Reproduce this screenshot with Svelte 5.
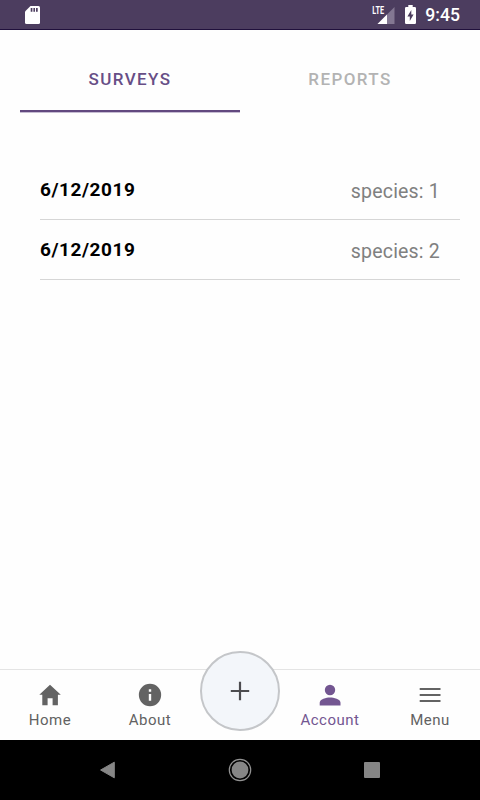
<script>
  const surveys = [
    { date: '6/12/2019', species: 1 },
    { date: '6/12/2019', species: 2 }
  ];
</script>

<div class="screen">
  <header class="status">
    <svg class="sd" width="15" height="18" viewBox="0 0 15 18">
      <path fill="#fff" d="M5.5 0H13.5Q15 0 15 1.5V16.5Q15 18 13.5 18H1.5Q0 18 0 16.5V5.5Z" />
      <path fill="#4c3d5f" d="M5.7 2h1.7v3.7H5.7zM8.4 2h1.6v3.7H8.4zM11 2h1.7v3.7H11z" />
    </svg>
    <div class="indicators">
      <svg class="signal" width="23" height="19" viewBox="0 0 23 19">
        <path fill="#837792" d="M22.5 1V18H5.5Z" />
        <path fill="#fff" d="M15 8.5V18H5.5Z" />
        <path fill="#4c3d5f" d="M0 0H12.5V9H0Z" />
        <text x="0.3" y="8.3" textLength="11.7" lengthAdjust="spacingAndGlyphs">LTE</text>
      </svg>
      <svg class="battery" width="11" height="19" viewBox="0 0 11 19">
        <path fill="#fff" d="M3.3 0H7.7V2H9.8Q11 2 11 3.2V17.7Q11 19 9.8 19H1.2Q0 19 0 17.7V3.2Q0 2 1.2 2H3.3Z" />
        <path fill="#4c3d5f" d="M6.3 5V9.6H8.6L4.8 16V11.4H2.4Z" />
      </svg>
      <span class="clock">9:45</span>
    </div>
  </header>

  <div class="tabs">
    <button class="active">SURVEYS</button>
    <button>REPORTS</button>
  </div>

  <main>
    {#each surveys as survey}
      <div class="row">
        <strong>{survey.date}</strong>
        <span>species: {survey.species}</span>
      </div>
    {/each}
  </main>

  <nav>
    <div class="item">
      <svg width="26" height="26" viewBox="0 0 26 26"><path d="M13 2.8L23.8 12.8H20.9V23.2H15.6V16.2H10.6V23.2H5.3V12.8H2.3Z" /></svg>
      <span>Home</span>
    </div>
    <div class="item">
      <svg width="26" height="26" viewBox="0 0 24 24"><path d="M12 1.7a10.3 10.3 0 1 0 0 20.6 10.3 10.3 0 0 0 0-20.6zM13.1 17.4h-2.2v-6.4h2.2zm0-8.3h-2.2V6.8h2.2z" /></svg>
      <span>About</span>
    </div>
    <div class="center">
      <div class="add">
        <svg width="20" height="20" viewBox="0 0 20 20"><path d="M8.9 .8h2.2v8.1h8.1v2.2h-8.1v8.1H8.9v-8.1H.8V8.9h8.1z" /></svg>
      </div>
    </div>
    <div class="item current">
      <svg width="26" height="26" viewBox="0 0 26 26"><circle cx="13" cy="8" r="5.2" /><path d="M2.7 23.5V20.7C2.7 17.3 9.3 15.6 13 15.6S23.5 17.3 23.5 20.7V23.5Z" /></svg>
      <span>Account</span>
    </div>
    <div class="item">
      <svg width="26" height="26" viewBox="0 0 26 26"><path d="M2.7 5.9h20.8v2.2H2.7zM2.7 11.9h20.8v2.2H2.7zM2.7 17.9h20.8v2.2H2.7z" /></svg>
      <span>Menu</span>
    </div>
  </nav>

  <footer>
    <svg width="16" height="18" viewBox="0 0 16 18"><path d="M14.3 1.2V16.8L.6 9Z" stroke="#868686" stroke-width="1" stroke-linejoin="round" /></svg>
    <svg width="24" height="24" viewBox="0 0 24 24"><circle cx="12" cy="12" r="8.4" /><circle cx="12" cy="12" r="10.7" fill="none" stroke="#929292" stroke-width="1.2" /></svg>
    <svg width="16" height="16" viewBox="0 0 16 16"><rect width="16" height="16" rx="1" /></svg>
  </footer>
</div>

<style>
  :global(body) {
    margin: 0;
  }
  .screen {
    display: flex;
    flex-direction: column;
    width: 480px;
    height: 800px;
    background: #fefefe;
    font-family: Roboto, sans-serif;
    overflow: hidden;
  }
  .status {
    box-sizing: border-box;
    height: 30px;
    flex: none;
    display: flex;
    justify-content: space-between;
    align-items: flex-start;
    padding: 0 20px 0 25px;
    background: #4c3d5f;
    border-bottom: 1px solid #20103c;
  }
  .sd {
    margin-top: 6px;
  }
  .indicators {
    display: flex;
    align-items: flex-start;
  }
  .signal {
    margin: 6px 10px 0 0;
    overflow: visible;
  }
  .signal text {
    fill: #fff;
    font-size: 10.5px;
    font-weight: 700;
  }
  .battery {
    margin: 5px 9px 0 0;
  }
  .clock {
    font-size: 17.6px;
    font-weight: 500;
    line-height: 21px;
    margin-top: 5px;
    color: #fff;
  }
  .tabs {
    display: flex;
    flex: none;
    height: 82px;
    margin: 0 20px;
  }
  .tabs button {
    box-sizing: border-box;
    flex: 1;
    border: 0;
    border-bottom: 2px solid transparent;
    background: none;
    height: 82px;
    padding: 30px 0 12px;
    font: 500 17px/38px Roboto, sans-serif;
    letter-spacing: 1.4px;
    color: #b3b3b3;
  }
  .tabs .active {
    color: #674e86;
    border-bottom-color: #62497f;
    box-shadow: 0 1px 0 #c6bcd2;
  }
  main {
    flex: 1;
    padding: 48px 20px 0 40px;
  }
  .row {
    box-sizing: border-box;
    height: 60px;
    display: flex;
    justify-content: space-between;
    align-items: center;
    padding-right: 20px;
    border-bottom: 1px solid #d6d6d6;
    font-size: 19px;
  }
  .row strong {
    letter-spacing: 0.55px;
    font-weight: 700;
    color: #000;
  }
  .row span {
    font-size: 19.5px;
    letter-spacing: 0.2px;
    color: #808080;
    padding-top: 4px;
  }
  nav {
    box-sizing: border-box;
    height: 71px;
    flex: none;
    display: flex;
    border-top: 1px solid #e4e4e4;
    color: #626262;
  }
  svg {
    display: block;
    flex: none;
  }
  nav svg {
    fill: #636363;
  }
  .item {
    width: 100px;
    display: flex;
    flex-direction: column;
    align-items: center;
    padding-top: 12px;
    font-size: 15px;
    line-height: 20px;
    letter-spacing: 0.5px;
  }
  .item span {
    margin-top: 2px;
  }
  .current {
    color: #735691;
  }
  .current svg {
    fill: #735691;
  }
  .center {
    width: 80px;
  }
  .add {
    box-sizing: border-box;
    width: 80px;
    height: 80px;
    margin-top: -19px;
    border: 2px solid #c4c6c9;
    border-radius: 50%;
    background: #f3f6fa;
    display: flex;
    align-items: center;
    justify-content: center;
  }
  .add svg {
    fill: #4c4c4f;
  }
  footer {
    height: 60px;
    flex: none;
    box-sizing: border-box;
    display: flex;
    justify-content: space-between;
    align-items: center;
    padding: 0 100px;
    background: #000;
  }
  footer svg {
    fill: #868686;
  }
</style>
